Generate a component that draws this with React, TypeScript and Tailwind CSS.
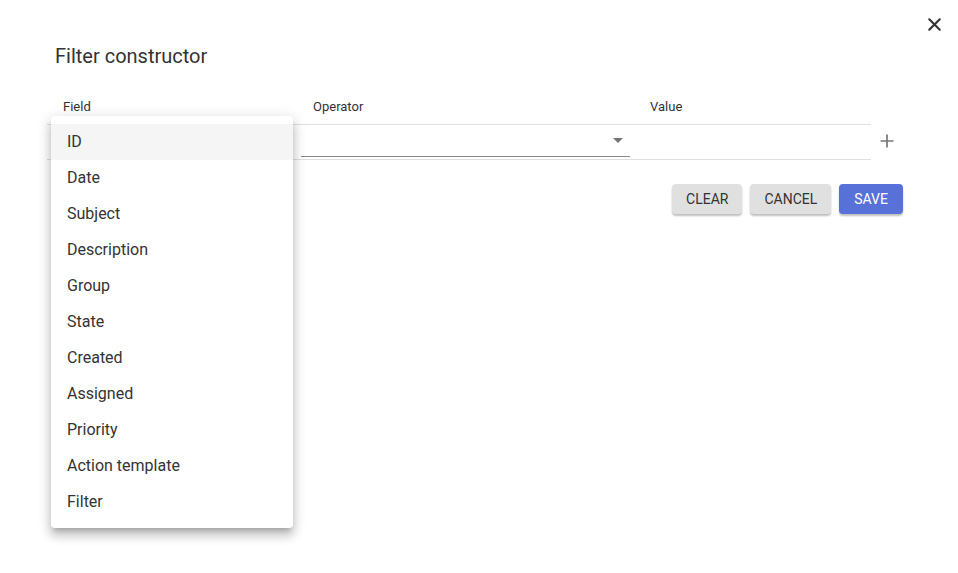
import { X } from "lucide-react";

const fields = [
  "ID",
  "Date",
  "Subject",
  "Description",
  "Group",
  "State",
  "Created",
  "Assigned",
  "Priority",
  "Action template",
  "Filter",
];

export default function App() {
  return (
    <div
      className="relative w-[958px] h-[573px] bg-white text-[#333] overflow-hidden"
      style={{ fontFamily: "Roboto, 'Liberation Sans', sans-serif" }}
    >
      <button className="absolute right-[14px] top-[14px] w-[20px] h-[20px] grid place-items-center text-[#333]">
        <X className="w-[21px] h-[21px]" strokeWidth={2.4} />
      </button>

      <div className="pl-[55px] pt-[43px]">
        <h2 className="text-[20px] leading-[26px] text-[#333]">Filter constructor</h2>
      </div>

      <div className="ml-[47px] mt-[29px] flex items-start">
        <div className="w-[824px]">
          {/* header */}
          <div className="grid grid-cols-[250px_337px_237px] h-[27px] text-[13px] leading-[16px] border-b border-[#e0e0e0]">
            <div className="pl-[16px] pt-[1px]">Field</div>
            <div className="pl-[16px] pt-[1px]">Operator</div>
            <div className="pl-[16px] pt-[1px]">Value</div>
          </div>
          {/* row */}
          <div className="grid grid-cols-[250px_337px_237px] h-[35px] border-b border-[#e0e0e0]">
            <div />
            <div className="px-[4px]">
              <div className="h-[32px] border-b border-[#8a8a8a] flex items-center justify-end pr-[7px]">
                <span className="w-0 h-0 border-l-[5px] border-r-[5px] border-t-[5px] border-l-transparent border-r-transparent border-t-[#757575]" />
              </div>
            </div>
            <div />
          </div>
        </div>
        <div className="pl-[8px] pt-[35px] text-[#757575]">
          <svg width="16" height="16" viewBox="0 0 16 16" className="block">
            <path d="M8 1.5v13M1.5 8h13" stroke="currentColor" strokeWidth="1.7" fill="none" />
          </svg>
        </div>
      </div>

      <div className="flex justify-end gap-[8px] pr-[55px] mt-[24px]">
        <button className="h-[30px] px-[14px] rounded-[4px] bg-[#e0e0e0] text-[14px] text-[#333] shadow-[0_2px_2px_rgba(0,0,0,0.25)]">
          CLEAR
        </button>
        <button className="h-[30px] px-[14px] rounded-[4px] bg-[#e0e0e0] text-[14px] text-[#333] shadow-[0_2px_2px_rgba(0,0,0,0.25)]">
          CANCEL
        </button>
        <button className="h-[30px] px-[15px] rounded-[4px] bg-[#5871d9] text-[14px] text-white shadow-[0_2px_2px_rgba(0,0,0,0.25)]">
          SAVE
        </button>
      </div>

      {/* dropdown menu */}
      <div className="absolute left-[51px] top-[116px] w-[242px] py-[8px] bg-white rounded-[4px] shadow-[0_5px_5px_-3px_rgba(0,0,0,0.2),0_8px_10px_1px_rgba(0,0,0,0.14),0_3px_14px_2px_rgba(0,0,0,0.12)]">
        {fields.map((f, i) => (
          <div
            key={f}
            className={
              "h-[36px] pl-[16px] flex items-center text-[16px] text-[#333] " +
              (i === 0 ? "bg-[#f5f5f5]" : "")
            }
          >
            {f}
          </div>
        ))}
      </div>
    </div>
  );
}
